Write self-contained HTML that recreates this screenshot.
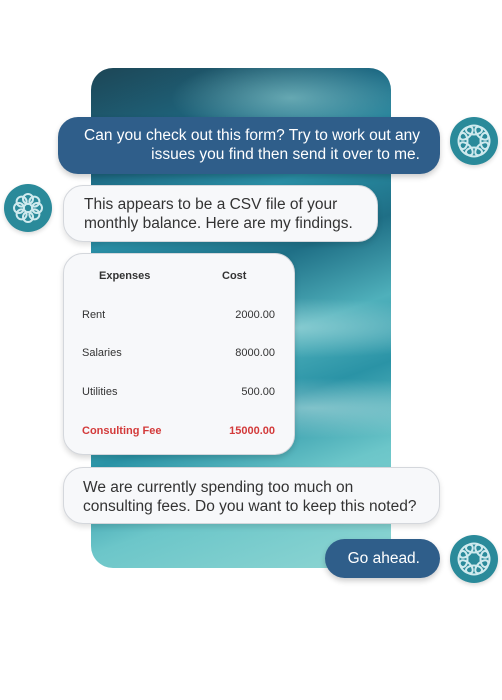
<!DOCTYPE html>
<html><head><style>
*{margin:0;padding:0;box-sizing:border-box}
body{width:502px;height:700px;background:#fff;position:relative;overflow:hidden;font-family:"Liberation Sans",sans-serif}
.card{position:absolute;left:91px;top:68px;width:300px;height:500px;border-radius:22px;overflow:hidden;
background:linear-gradient(160deg,#1d4656 0%,#1e6b85 18%,#2a8fa6 30%,#1f6f86 42%,#4fb0bb 55%,#2a93a6 66%,#6cc6c9 80%,#8fd6d3 100%);}
.card:before{content:"";position:absolute;inset:0;background:radial-gradient(ellipse 120px 40px at 200px 30px,rgba(150,210,210,.6),transparent),radial-gradient(ellipse 200px 30px at 200px 260px,rgba(190,230,230,.5),transparent),radial-gradient(ellipse 200px 30px at 220px 340px,rgba(200,230,230,.5),transparent)}
.b{position:absolute;border-radius:20px;font-size:15.5px;line-height:19px}
.u{background:#2f5e8a;color:#fff;text-align:right;box-shadow:0 3px 6px rgba(0,0,0,.2)}
.w{background:#f7f8fa;color:#333;border:1px solid #d4d7dc;box-shadow:0 3px 6px rgba(0,0,0,.12)}
.av{position:absolute;width:48px;height:48px;border-radius:50%;background:#2a8a9a;box-shadow:0 2px 4px rgba(0,0,0,.15)}
.t{position:absolute;left:63px;top:253px;width:232px;height:202px;background:#f7f8fa;border:1px solid #d4d7dc;border-radius:20px;box-shadow:0 3px 6px rgba(0,0,0,.15);font-size:11px;color:#333}
.t div{position:absolute}
.r{right:19px;text-align:right}
.red{color:#d33a3a;font-weight:bold}
</style></head><body>
<div class="card"></div>
<div class="b u" style="left:58px;top:117px;width:382px;height:57px;padding:9px 20px 0 0">Can you check out this form? Try to work out any<br>issues you find then send it over to me.</div>
<svg width="0" height="0" style="position:absolute"><defs>
<g id="ring" fill="none" stroke="#cfeaee" stroke-width="2"><ellipse rx="4.5" ry="8" transform="rotate(0) translate(0 -11) rotate(90)"/><ellipse rx="4.5" ry="8" transform="rotate(45) translate(0 -11) rotate(90)"/><ellipse rx="4.5" ry="8" transform="rotate(90) translate(0 -11) rotate(90)"/><ellipse rx="4.5" ry="8" transform="rotate(135) translate(0 -11) rotate(90)"/><ellipse rx="4.5" ry="8" transform="rotate(180) translate(0 -11) rotate(90)"/><ellipse rx="4.5" ry="8" transform="rotate(225) translate(0 -11) rotate(90)"/><ellipse rx="4.5" ry="8" transform="rotate(270) translate(0 -11) rotate(90)"/><ellipse rx="4.5" ry="8" transform="rotate(315) translate(0 -11) rotate(90)"/></g>
</defs></svg>
<div class="av" style="left:450px;top:117px"><svg width="48" height="48" viewBox="-24 -24 48 48"><use href="#ring"/></svg></div>
<div class="av" style="left:4px;top:184px"><svg width="48" height="48" viewBox="0 0 48 48" fill="none" stroke="#cfeaee" stroke-width="2"><g transform="translate(24 24)"><circle cx="0" cy="-9" r="5"/><circle cx="0" cy="9" r="5"/><circle cx="-9" cy="0" r="5"/><circle cx="9" cy="0" r="5"/><circle cx="6.4" cy="6.4" r="5"/><circle cx="-6.4" cy="6.4" r="5"/><circle cx="6.4" cy="-6.4" r="5"/><circle cx="-6.4" cy="-6.4" r="5"/></g></svg></div>
<div class="b w" style="left:63px;top:185px;width:315px;height:57px;padding:9px 0 0 20px">This appears to be a CSV file of your<br>monthly balance. Here are my findings.</div>
<div class="t">
<div style="left:35px;top:16px;font-weight:bold">Expenses</div><div style="left:158px;top:16px;font-weight:bold">Cost</div>
<div style="left:18px;top:55px">Rent</div><div class="r" style="top:55px">2000.00</div>
<div style="left:18px;top:93px">Salaries</div><div class="r" style="top:93px">8000.00</div>
<div style="left:18px;top:132px">Utilities</div><div class="r" style="top:132px">500.00</div>
<div class="red" style="left:18px;top:171px">Consulting Fee</div><div class="r red" style="top:171px">15000.00</div>
</div>
<div class="b w" style="left:63px;top:467px;width:377px;height:57px;padding:10px 0 0 19px">We are currently spending too much on<br>consulting fees. Do you want to keep this noted?</div>
<div class="b u" style="left:325px;top:539px;width:115px;height:39px;padding:10px 20px 0 0">Go ahead.</div>
<div class="av" style="left:450px;top:535px"><svg width="48" height="48" viewBox="-24 -24 48 48"><use href="#ring"/></svg></div>
</body></html>
